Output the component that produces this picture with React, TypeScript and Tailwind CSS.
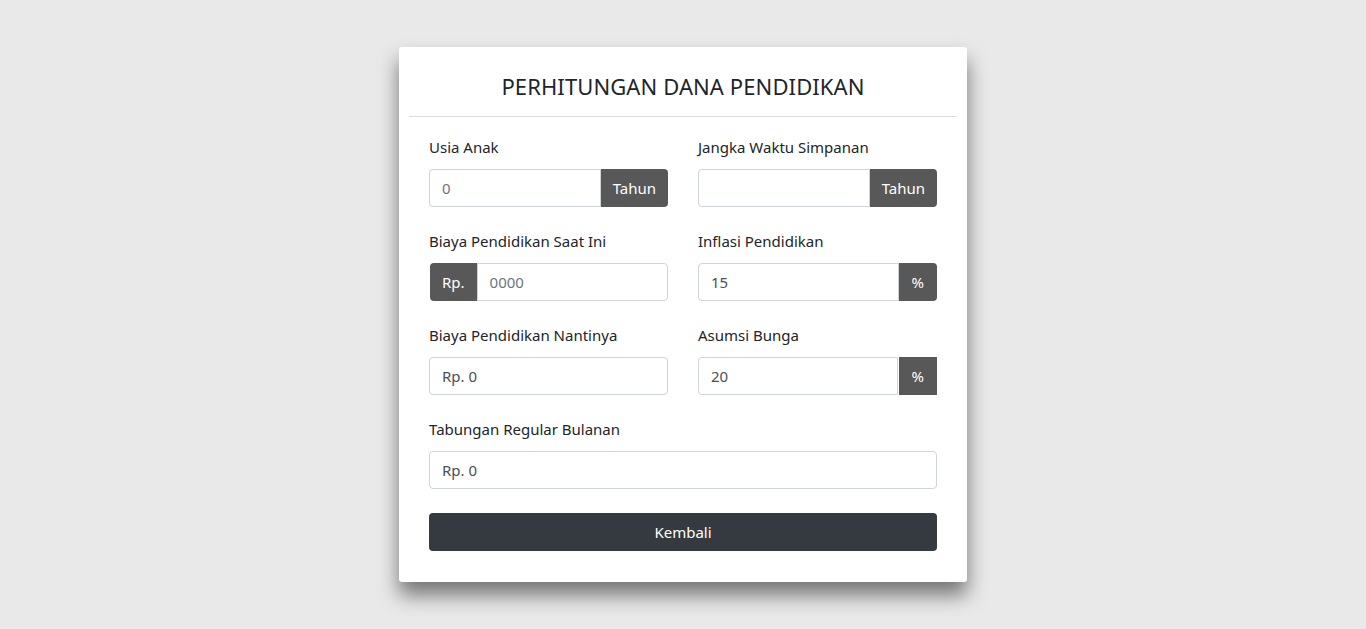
import { ReactNode } from 'react';

const font = { fontFamily: '"Noto Sans", "Open Sans", sans-serif' };

const Label = ({ children }: { children: ReactNode }) => (
  <label className="mb-[10px] block text-[15px]/[24px] text-[#212529]">{children}</label>
);

const Addon = ({ children, className = '' }: { children: ReactNode; className?: string }) => (
  <span className={`flex h-[38px] items-center bg-[#585858] text-[15px] text-white ${className}`}>{children}</span>
);

const inputBase =
  'h-[38px] min-w-0 flex-1 border border-[#ced4da] bg-white px-3 text-[15px] text-[#495057] outline-none placeholder:text-[#6c757d]';

export default function App() {
  return (
    <div style={font} className="flex min-h-[629px] w-full justify-center bg-[#e9e9e9] pt-[47px]">
      <div className="h-[535px] w-[568px] rounded-[3px] bg-white px-[10px] shadow-[0_13px_20px_rgba(0,0,0,0.5)]">
        <h1 className="pt-[25px] pb-[15px] text-center text-[22px]/[29px] tracking-[0.1px] text-[#212529]">
          PERHITUNGAN DANA PENDIDIKAN
        </h1>
        <div className="border-t border-[#dcdcdc]" />

        <div className="px-[20px] pt-[18px]">
          <div className="grid grid-cols-2 gap-x-[30px] gap-y-[22px]">
            <div>
              <Label>Usia Anak</Label>
              <div className="flex">
                <input className={`${inputBase} rounded-l-[4px]`} placeholder="0" />
                <Addon className="rounded-r-[4px] px-3">Tahun</Addon>
              </div>
            </div>
            <div>
              <Label>Jangka Waktu Simpanan</Label>
              <div className="flex">
                <input className={`${inputBase} rounded-l-[4px]`} />
                <Addon className="rounded-r-[4px] px-3">Tahun</Addon>
              </div>
            </div>

            <div>
              <Label>Biaya Pendidikan Saat Ini</Label>
              <div className="flex">
                <Addon className="ml-px rounded-l-[4px] px-3">Rp.</Addon>
                <input className={`${inputBase} rounded-r-[4px]`} placeholder="0000" />
              </div>
            </div>
            <div>
              <Label>Inflasi Pendidikan</Label>
              <div className="flex">
                <input className={`${inputBase} rounded-l-[4px]`} defaultValue="15" />
                <Addon className="rounded-r-[4px] px-[13px]">%</Addon>
              </div>
            </div>

            <div>
              <Label>Biaya Pendidikan Nantinya</Label>
              <div className="flex">
                <input className={`${inputBase} rounded-[4px]`} defaultValue="Rp. 0" readOnly />
              </div>
            </div>
            <div>
              <Label>Asumsi Bunga</Label>
              <div className="flex">
                <input className={`${inputBase} rounded-l-[4px]`} defaultValue="20" />
                <Addon className="ml-px px-[13px]">%</Addon>
              </div>
            </div>

            <div className="col-span-2">
              <Label>Tabungan Regular Bulanan</Label>
              <div className="flex">
                <input className={`${inputBase} rounded-[4px]`} defaultValue="Rp. 0" readOnly />
              </div>
            </div>
          </div>

          <button className="mt-[24px] h-[38px] w-full rounded-[4px] bg-[#343a40] text-[15px] text-white">
            Kembali
          </button>
        </div>
      </div>
    </div>
  );
}
